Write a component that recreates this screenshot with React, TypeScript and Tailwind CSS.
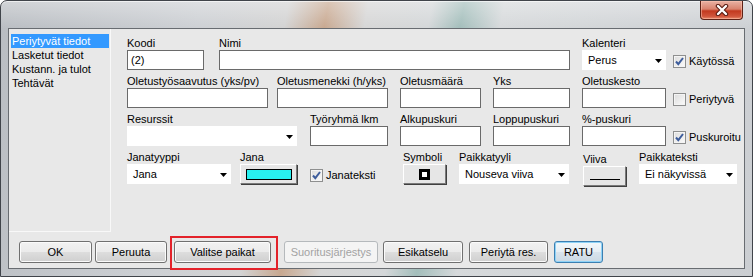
import React from 'react';

// Small Win7-style widgets used by the dialog
function TextBox({ value = '' }: { value?: string }) {
  return (
    <div className="h-[20px] border border-[#6a6a6a] bg-white pl-[3px] text-[11px] leading-[18px] text-black">
      {value}
    </div>
  );
}

function Combo({ value = '' }: { value?: string }) {
  return (
    <div className="h-[20px] bg-white flex items-center justify-between pl-[6px] pr-[4px] text-[11px] text-black">
      <span>{value}</span>
      <svg width="7" height="4" viewBox="0 0 7 4" className="mt-[2px]">
        <path d="M0 0H7L3.5 4Z" fill="#000" />
      </svg>
    </div>
  );
}

function Field({ label, className = '', children }: { label: string; className?: string; children: React.ReactNode }) {
  return (
    <div className={`flex flex-col ${className}`}>
      <div className="h-[14px] leading-[14px] text-[11px] text-black whitespace-nowrap">{label}</div>
      {children}
    </div>
  );
}

function Check({ label, checked = false, className = '' }: { label: string; checked?: boolean; className?: string }) {
  return (
    <div className={`flex items-center gap-[3px] h-[20px] mt-[15px] ${className}`}>
      <div className="w-[13px] h-[13px] border border-[#8e8f8f] bg-[linear-gradient(135deg,#dcdcdc,#fbfbfb)] shadow-[inset_0_0_0_1px_#f4f4f4] flex items-center justify-center">
        {checked && (
          <svg width="11" height="11" viewBox="0 0 11 11">
            <path d="M2 5.5L4.3 8.2L9 2" fill="none" stroke="#3e5d9c" strokeWidth="2" />
          </svg>
        )}
      </div>
      <span className="text-[11px] text-black whitespace-nowrap">{label}</span>
    </div>
  );
}

function RaisedButton({ children }: { children: React.ReactNode }) {
  return (
    <div className="h-[20px] flex items-center justify-center bg-[#e6e6e6] border border-t-white border-l-white border-r-[#7a7a7a] border-b-[#7a7a7a] shadow-[1px_1px_0_#404040]">
      {children}
    </div>
  );
}

type BtnKind = 'normal' | 'disabled' | 'default';

function WinButton({ label, className = '', kind = 'normal' }: { label: string; className?: string; kind?: BtnKind }) {
  const look =
    kind === 'disabled'
      ? 'border-[#b5b9bc] bg-[#f4f4f4] text-[#a3a3a3]'
      : kind === 'default'
        ? 'border-[#3c7fb1] bg-[linear-gradient(180deg,#f3f8fb_0%,#e6eef4_48%,#d8e3ec_52%,#cbd9e4_100%)] shadow-[inset_0_0_0_1px_#8fd3f7] text-black'
        : 'border-[#707070] bg-[linear-gradient(180deg,#f2f2f2_0%,#ebebeb_48%,#dddddd_52%,#cfcfcf_100%)] shadow-[inset_0_0_0_1px_#fbfbfb] text-black';
  return (
    <div className={`h-[22px] rounded-[3px] border flex items-center justify-center text-[11px] ${look} ${className}`}>
      {label}
    </div>
  );
}

const sections = ['Periytyvät tiedot', 'Lasketut tiedot', 'Kustann. ja tulot', 'Tehtävät'];

export default function App() {
  return (
    <div className="w-[753px] h-[277px] flex flex-col rounded-t-[7px] border border-[#40444a] font-['Liberation_Sans',Arial,sans-serif] bg-[linear-gradient(180deg,rgba(255,255,255,0.35)_0%,rgba(255,255,255,0)_10%),linear-gradient(100deg,#b9bdc2_0%,#cdd0d4_25%,#d3d3d3_36%,#c8a890_41%,#d6d6d6_46%,#d4d7d9_54%,#a3bebb_58%,#d6d9db_63%,#cbced2_100%)] shadow-[inset_0_1px_0_rgba(255,255,255,0.6)] overflow-hidden">
      {/* title bar */}
      <div className="h-[27px] flex justify-end pr-[9px]">
        <div className="w-[43px] h-[19px] rounded-b-[4px] border border-t-0 border-[#5e2216] bg-[linear-gradient(180deg,#e9b2a4_0%,#d9826d_45%,#c2391f_55%,#d0553b_85%,#e88a6c_100%)] shadow-[inset_0_0_0_1px_rgba(255,200,180,0.5)] flex items-center justify-center">
          <svg width="14" height="12" viewBox="0 0 14 12">
            <path d="M3 2L11 10M11 2L3 10" stroke="#5a1c12" strokeWidth="4.5" strokeLinecap="round" />
            <path d="M3 2L11 10M11 2L3 10" stroke="#ffffff" strokeWidth="2.4" strokeLinecap="round" />
          </svg>
        </div>
      </div>

      <div className="flex-1 flex px-[7px] pb-[7px]">
        <div className="flex-1 border border-[#686c71] bg-[#e8e8e8] flex flex-col">
          <div className="flex h-[203px]">
            {/* left section list */}
            <div className="w-[102px] border-r border-b border-[#f8f8f8] pt-[5px] pl-[2px] pr-[1px]">
              {sections.map((s, i) => (
                <div
                  key={s}
                  className={`h-[14px] leading-[14px] pl-[1px] text-[11px] whitespace-nowrap ${i === 0 ? 'bg-[#3399ff] text-white' : 'text-black'}`}
                >
                  {s}
                </div>
              ))}
            </div>

            {/* form */}
            <div className="flex-1 pl-[16px] pt-[7px] flex flex-col gap-[3px]">
              <div className="flex">
                <Field label="Koodi" className="w-[77px]"><TextBox value="(2)" /></Field>
                <Field label="Nimi" className="ml-[15px] w-[351px]"><TextBox /></Field>
                <Field label="Kalenteri" className="ml-[12px] w-[84px]"><Combo value="Perus" /></Field>
                <Check label="Käytössä" checked className="ml-[7px]" />
              </div>

              <div className="flex">
                <Field label="Oletustyösaavutus (yks/pv)" className="w-[141px]"><TextBox /></Field>
                <Field label="Oletusmenekki (h/yks)" className="ml-[9px] w-[111px]"><TextBox /></Field>
                <Field label="Oletusmäärä" className="ml-[12px] w-[81px]"><TextBox /></Field>
                <Field label="Yks" className="ml-[12px] w-[77px]"><TextBox /></Field>
                <Field label="Oletuskesto" className="ml-[12px] w-[84px]"><TextBox /></Field>
                <Check label="Periytyvä" className="ml-[7px]" />
              </div>

              <div className="flex">
                <Field label="Resurssit" className="w-[170px]"><Combo /></Field>
                <Field label="Työryhmä lkm" className="ml-[13px] w-[78px]"><TextBox /></Field>
                <Field label="Alkupuskuri" className="ml-[12px] w-[81px]"><TextBox /></Field>
                <Field label="Loppupuskuri" className="ml-[12px] w-[77px]"><TextBox /></Field>
                <Field label="%-puskuri" className="ml-[12px] w-[84px]"><TextBox /></Field>
                <Check label="Puskuroitu" checked className="ml-[7px]" />
              </div>

              <div className="flex">
                <Field label="Janatyyppi" className="w-[104px]"><Combo value="Jana" /></Field>
                <Field label="Jana" className="ml-[9px] w-[57px]">
                  <RaisedButton>
                    <div className="w-[46px] h-[11px] border border-black bg-[#28f0f0]" />
                  </RaisedButton>
                </Field>
                <div className="ml-[13px] w-[93px]">
                  <Check label="Janateksti" checked />
                </div>
                <Field label="Symboli" className="w-[43px]">
                  <RaisedButton>
                    <div className="w-[11px] h-[11px] border-[3px] border-black bg-white" />
                  </RaisedButton>
                </Field>
                <Field label="Paikkatyyli" className="ml-[13px] w-[110px]"><Combo value="Nouseva viiva" /></Field>
                <Field label="Viiva" className="ml-[14px] w-[43px] mt-[2px]">
                  <RaisedButton>
                    <div className="w-[30px] h-[1px] bg-black mt-[6px]" />
                  </RaisedButton>
                </Field>
                <Field label="Paikkateksti" className="ml-[13px] w-[98px]"><Combo value="Ei näkyvissä" /></Field>
              </div>
            </div>
          </div>

          {/* bottom buttons */}
          <div className="flex items-start pl-[10px] mt-[9px]">
            <WinButton label="OK" className="w-[73px]" />
            <WinButton label="Peruuta" className="ml-[3px] w-[72px]" />
            <div className="relative ml-[7px]">
              <WinButton label="Valitse paikat" className="w-[97px]" />
              <div className="absolute -left-[4px] -right-[7px] -top-[5px] -bottom-[7px] border-2 border-[#e3222a]" />
            </div>
            <WinButton label="Suoritusjärjestys" kind="disabled" className="ml-[13px] w-[94px]" />
            <WinButton label="Esikatselu" className="ml-[5px] w-[80px]" />
            <WinButton label="Periytä res." className="ml-[6px] w-[79px]" />
            <WinButton label="RATU" kind="default" className="ml-[6px] w-[49px]" />
          </div>
        </div>
      </div>
    </div>
  );
}
